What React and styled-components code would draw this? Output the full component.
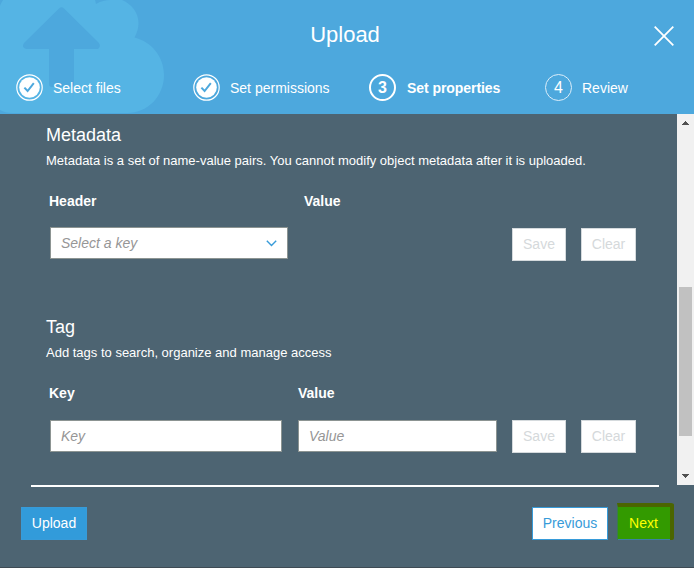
import React from "react";
import styled, { createGlobalStyle } from "styled-components";

const GlobalStyle = createGlobalStyle`
  *, *::before, *::after { box-sizing: border-box; }
  body { margin: 0; background: #4d6472; }
  body, button, input { font-family: "Liberation Sans", Arial, sans-serif; }
`;

const Dialog = styled.div`
  display: flex;
  flex-direction: column;
  width: 694px;
  height: 568px;
  overflow: hidden;
  background: #4d6472;
  border-bottom: 1px solid #3e4b54;
  color: #fff;
  font-size: 14px;
`;

const Header = styled.header`
  position: relative;
  flex: none;
  height: 114px;
  background: #4da8dd;
`;

const CloudArt = styled.svg`
  position: absolute;
  left: 0;
  top: 0;
`;

const TitleBar = styled.div`
  position: relative;
  display: grid;
  grid-template-columns: 40px 1fr 40px;
  align-items: center;
  height: 74px;
  padding-right: 4px;
`;

const Title = styled.h1`
  grid-column: 2;
  margin: -5px 0 0;
  font-size: 22px;
  font-weight: 400;
  line-height: 26px;
  text-align: center;
`;

const CloseButton = styled.button`
  display: flex;
  width: 20px;
  height: 20px;
  margin: -3px 0 0 4px;
  padding: 0;
  border: 0;
  background: none;
`;

const Steps = styled.ol`
  position: relative;
  display: grid;
  grid-template-columns: 177px 176px 176px 1fr;
  margin: 0;
  padding: 0 0 0 16px;
  list-style: none;
`;

const Step = styled.li`
  display: flex;
  align-items: center;
  gap: ${(p) => (p.$current ? 11 : 10)}px;
  height: 27px;
  font-weight: ${(p) => (p.$current ? 700 : 400)};
  letter-spacing: ${(p) => (p.$current ? "-0.06px" : "normal")};
  line-height: 16px;
  white-space: nowrap;
`;

const StepNumber = styled.span`
  display: flex;
  align-items: center;
  justify-content: center;
  width: 27px;
  height: 27px;
  border: ${(p) => (p.$current ? "2px solid #fff" : "1px solid #dceefa")};
  border-radius: 50%;
  font-size: 16px;
  line-height: 18px;
`;

const Body = styled.div`
  display: flex;
  flex: none;
  height: 371px;
`;

const Content = styled.main`
  flex: 1;
  padding: 10px 0 0 46px;
`;

const Section = styled.section`
  height: 192px;
`;

const SectionTitle = styled.h2`
  margin: 0;
  font-size: 18px;
  font-weight: 400;
  line-height: 22px;
`;

const Description = styled.p`
  margin: 7px 0 0;
  font-size: 13px;
  line-height: 16px;
  white-space: nowrap;
`;

const Labels = styled.div`
  display: grid;
  grid-template-columns: ${(p) => p.$first}px 1fr;
  margin-top: 24px;
  padding-left: 3px;
  font-weight: 700;
  line-height: 16px;
`;

const Fields = styled.div`
  display: flex;
  align-items: flex-start;
  margin-top: ${(p) => p.$top}px;
  padding-left: 4px;
`;

const Field = styled.div`
  display: flex;
  align-items: center;
  justify-content: space-between;
  width: ${(p) => p.$width}px;
  height: 32px;
  margin-right: ${(p) => p.$gap}px;
  padding: 0 10px;
  border: 1px solid #8c9492;
  background: #fff;
  color: #969696;
  font-style: italic;
`;

const TextInput = styled.input`
  width: 100%;
  padding: 0;
  border: 0;
  outline: 0;
  background: none;
  font-size: 14px;
  font-style: italic;
  line-height: 16px;
  &::placeholder { color: #969696; opacity: 1; }
`;

const Button = styled.button`
  width: ${(p) => p.$width}px;
  height: 33px;
  padding: 0 0 1px;
  border: 1px solid #379bd9;
  background: #fff;
  color: #379bd9;
  font-size: 14px;
  line-height: 16px;
`;

const DisabledButton = styled(Button)`
  margin: ${(p) => p.$top}px 15px 0 0;
  border-color: #d5dadd;
  color: #d5d9db;
`;

const UploadButton = styled(Button)`
  background: #329bda;
  color: #fff;
`;

const NextButton = styled(Button)`
  height: 37px;
  margin: -4px 0 0 9px;
  border: solid #4b6500;
  border-width: 4px 4px 0 1px;
  border-left-color: #397c4b;
  border-radius: 0 3px 2px 0;
  background: #339a00;
  box-shadow: inset 0 -1px #3b81a0;
  color: #ff0;
  padding: 0 1px 2px 0;
`;

const ScrollTrack = styled.div`
  display: flex;
  flex-direction: column;
  align-items: center;
  width: 17px;
  background: #f1f1f1;
`;

const ScrollThumb = styled.div`
  width: 13px;
  height: 149px;
  margin: 156px 0 auto;
  background: #c1c1c1;
`;

const ScrollArrow = styled.svg`
  display: block;
  flex: none;
`;

const Divider = styled.div`
  flex: none;
  height: 2px;
  margin: 0 35px 0 31px;
  background: #fff;
`;

const Footer = styled.footer`
  display: flex;
  align-items: flex-start;
  justify-content: space-between;
  padding: 20px 20px 0 21px;
`;

const FooterActions = styled.div`
  display: flex;
`;

function DoneIcon() {
  return (
    <svg width="27" height="27" viewBox="0 0 27 27">
      <circle cx="13.5" cy="13.5" r="12.7" fill="none" stroke="#fff" strokeWidth="1.2" />
      <circle cx="13.5" cy="13.5" r="10.3" fill="#fff" />
      <path d="M8.400 13.600 11.600 17 17.800 9.200" fill="none" stroke="#4da8dd" strokeWidth="2" />
    </svg>
  );
}

function Arrow({ down }) {
  return (
    <ScrollArrow width="17" height="17" viewBox="0 0 17 17" shapeRendering="crispEdges">
      <path d={down ? "M5 6h7v1h-1v1h-1v1H9v1H8V9H7V8H6V7H5z" : "M5 11h7v-1h-1V9h-1V8H9V7H8v1H7v1H6v1H5z"} fill="#505050" />
    </ScrollArrow>
  );
}

function SaveClear({ top }) {
  return (
    <>
      <DisabledButton $width={54} $top={top} disabled>Save</DisabledButton>
      <DisabledButton $width={55} $top={top} disabled>Clear</DisabledButton>
    </>
  );
}

export default function App() {
  return (
    <>
      <GlobalStyle />
      <Dialog>
        <Header>
          <CloudArt width="180" height="114" viewBox="0 0 180 114">
            <path d="M0 6Q1 3 3 0H95L96 4C101 1 106 0 110 0H122C132 4 138.500 13 138.500 23C138.500 28 137 33 134.500 37.500C152 42 164 57 164 75C164 96 148 113 127 113H12Q5 113 0 110Z" fill="#55b4e4" />
            <path d="M59 8.500Q61.500 6 64 8.500L98.500 42.500Q101.500 46 98 49H74V84Q74 87 71 87H52Q49 87 49 84V49H26Q21 47 24 43Z" fill="#4da8dd" />
          </CloudArt>
          <TitleBar>
            <Title>Upload</Title>
            <CloseButton aria-label="Close">
              <svg width="20" height="20" viewBox="0 0 20 20">
                <path d="M.7.7 19.300 19.300M19.300.7.7 19.300" fill="none" stroke="#fff" strokeWidth="1.8" />
              </svg>
            </CloseButton>
          </TitleBar>
          <Steps>
            <Step><DoneIcon />Select files</Step>
            <Step><DoneIcon />Set permissions</Step>
            <Step $current><StepNumber $current>3</StepNumber>Set properties</Step>
            <Step><StepNumber>4</StepNumber>Review</Step>
          </Steps>
        </Header>
        <Body>
          <Content>
            <Section>
              <SectionTitle>Metadata</SectionTitle>
              <Description>Metadata is a set of name-value pairs. You cannot modify object metadata after it is uploaded.</Description>
              <Labels $first={255}><span>Header</span><span>Value</span></Labels>
              <Fields $top={18}>
                <Field $width={238} $gap={224}>
                  Select a key
                  <svg width="11" height="7" viewBox="0 0 11 7">
                    <path d="M.8.8 5.500 5.500 10.200.8" fill="none" stroke="#379bd9" strokeWidth="1.400" />
                  </svg>
                </Field>
                <SaveClear top={1} />
              </Fields>
            </Section>
            <Section>
              <SectionTitle>Tag</SectionTitle>
              <Description>Add tags to search, organize and manage access</Description>
              <Labels $first={249}><span>Key</span><span>Value</span></Labels>
              <Fields $top={19}>
                <Field $width={232} $gap={16}><TextInput placeholder="Key" /></Field>
                <Field $width={199} $gap={15}><TextInput placeholder="Value" /></Field>
                <SaveClear top={0} />
              </Fields>
            </Section>
          </Content>
          <ScrollTrack>
            <Arrow />
            <ScrollThumb />
            <Arrow down />
          </ScrollTrack>
        </Body>
        <Divider />
        <Footer>
          <UploadButton $width={66}>Upload</UploadButton>
          <FooterActions>
            <Button $width={76}>Previous</Button>
            <NextButton $width={57}>Next</NextButton>
          </FooterActions>
        </Footer>
      </Dialog>
    </>
  );
}
